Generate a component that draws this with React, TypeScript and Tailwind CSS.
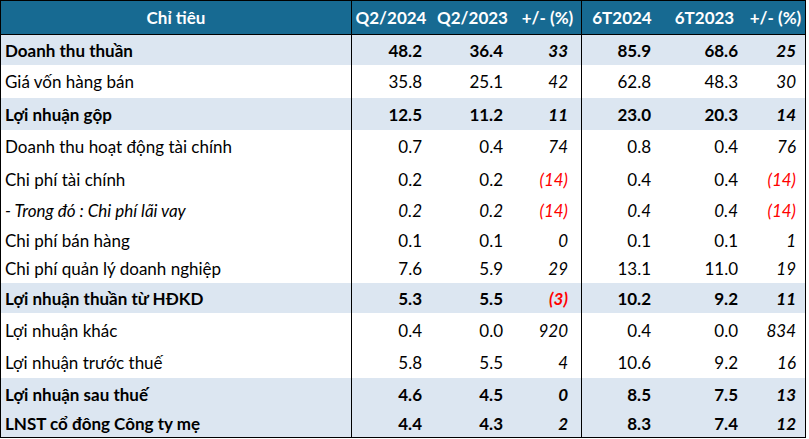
import React from "react";

type Row = {
  label: string;
  v: string[];
  h: number;
  bold?: boolean;
  italic?: boolean;
  shade?: boolean;
};

const rows: Row[] = [
  { label: "Doanh thu thuần", v: ["48.2", "36.4", "33", "85.9", "68.6", "25"], h: 30, bold: true, shade: true },
  { label: "Giá vốn hàng bán", v: ["35.8", "25.1", "42", "62.8", "48.3", "30"], h: 33 },
  { label: "Lợi nhuận gộp", v: ["12.5", "11.2", "11", "23.0", "20.3", "14"], h: 32, bold: true, shade: true },
  { label: "Doanh thu hoạt động tài chính", v: ["0.7", "0.4", "74", "0.8", "0.4", "76"], h: 33 },
  { label: "Chi phí tài chính", v: ["0.2", "0.2", "(14)", "0.4", "0.4", "(14)"], h: 32 },
  { label: "- Trong đó : Chi phí lãi vay", v: ["0.2", "0.2", "(14)", "0.4", "0.4", "(14)"], h: 31, italic: true },
  { label: "Chi phí bán hàng", v: ["0.1", "0.1", "0", "0.1", "0.1", "1"], h: 28 },
  { label: "Chi phí quản lý doanh nghiệp", v: ["7.6", "5.9", "29", "13.1", "11.0", "19"], h: 29 },
  { label: "Lợi nhuận thuần từ HĐKD", v: ["5.3", "5.5", "(3)", "10.2", "9.2", "11"], h: 30, bold: true, shade: true },
  { label: "Lợi nhuận khác", v: ["0.4", "0.0", "920", "0.4", "0.0", "834"], h: 34 },
  { label: "Lợi nhuận trước thuế", v: ["5.8", "5.5", "4", "10.6", "9.2", "16"], h: 31 },
  { label: "Lợi nhuận sau thuế", v: ["4.6", "4.5", "0", "8.5", "7.5", "13"], h: 32, bold: true, shade: true },
  { label: "LNST cổ đông Công ty mẹ", v: ["4.4", "4.3", "2", "8.3", "7.4", "12"], h: 27, bold: true, shade: true },
];

const cellCls = [
  "w-[79px] border-l border-black pr-[8px]",
  "w-[80px] pr-[7px]",
  "w-[71px] pr-[13px]",
  "w-[78px] border-l border-black pr-[8px]",
  "w-[85px] pr-[6px]",
  "w-[61px] pr-[9px]",
];

const headCls = [
  "w-[79px] border-l border-black",
  "w-[80px] pl-[5px]",
  "w-[71px] pl-[4px]",
  "w-[78px] border-l border-black pl-[3px]",
  "w-[85px] pl-[6px]",
  "w-[61px] pl-[2px]",
];

const heads = ["Q2/2024", "Q2/2023", "+/- (%)", "6T2024", "6T2023", "+/- (%)"];

export default function App() {
  return (
    <div
      className="w-[809px] h-[439px] bg-white text-black text-[17px] leading-none"
      style={{ fontFamily: "Lato, 'Noto Sans', sans-serif" }}
    >
      <div className="w-[806px] border border-black">
        <div className="flex h-[34px] bg-[#176a92] text-white font-bold border-b border-black">
          <div className="w-[350px] flex items-center justify-center">Chỉ tiêu</div>
          {heads.map((h, i) => (
            <div key={i} className={`${headCls[i]} flex items-center justify-center whitespace-nowrap`}>
              {h}
            </div>
          ))}
        </div>
        {rows.map((r, ri) => (
          <div
            key={ri}
            className={`flex ${r.shade ? "bg-[#dce6f1]" : "bg-white"} ${r.bold ? "font-bold" : ""} ${r.italic ? "italic" : ""}`}
            style={{ height: r.h }}
          >
            <div className="w-[350px] pl-[4px] flex items-center">{r.label}</div>
            {r.v.map((v, i) => {
              const pct = i === 2 || i === 5;
              const neg = v.startsWith("(");
              return (
                <div
                  key={i}
                  className={`${cellCls[i]} flex items-center justify-end ${pct ? "italic" : ""} ${neg ? "text-[#ff0000]" : ""}`}
                >
                  {v}
                </div>
              );
            })}
          </div>
        ))}
      </div>
    </div>
  );
}
